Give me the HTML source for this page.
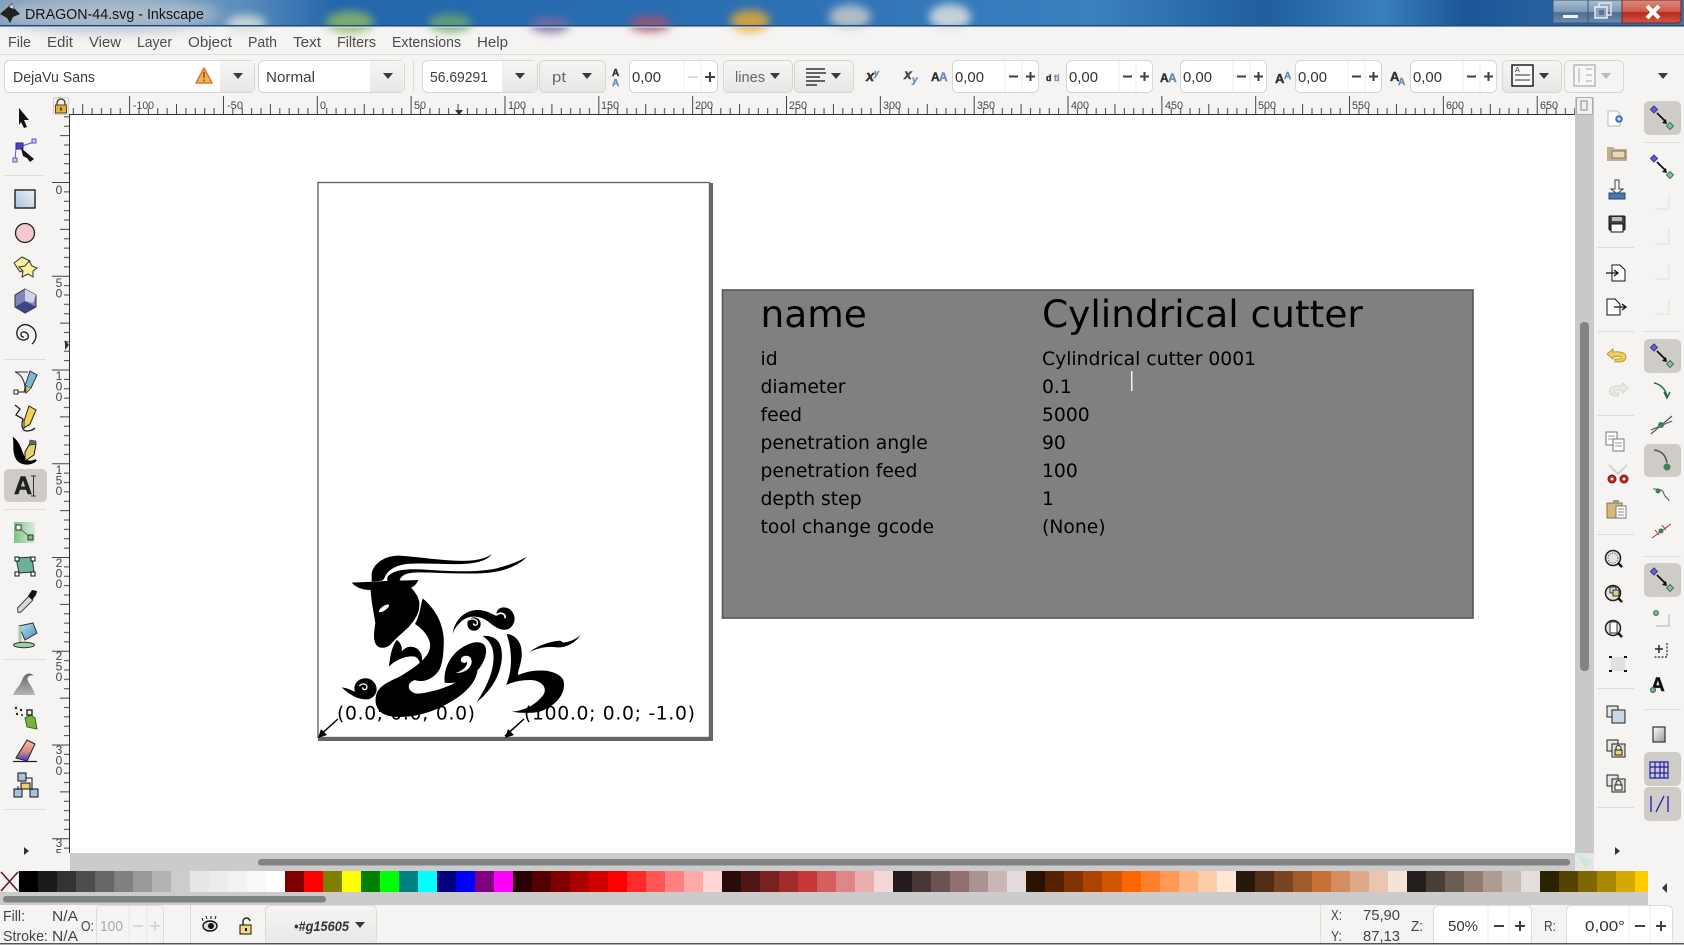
<!DOCTYPE html>
<html><head><meta charset="utf-8"><title>DRAGON-44.svg - Inkscape</title>
<style>
html,body{margin:0;padding:0;background:#f5f4f2;width:1684px;height:946px;overflow:hidden}
svg{position:absolute;left:0;top:0;display:block}
svg text{font-family:"Liberation Sans",sans-serif}
#pal{position:absolute;left:18.6px;top:871px;width:1629.4px;height:21px;display:flex;overflow:hidden}
#pal i{flex:0 0 19.03px;height:21px;display:block}
</style></head><body>
<svg width="1684" height="946" viewBox="0 0 1684 946" xmlns="http://www.w3.org/2000/svg">
<defs>
<linearGradient id="tb" x1="0" x2="1" y1="0" y2="0"><stop offset="0" stop-color="#7f9cb8"/><stop offset=".14" stop-color="#5f8fbd"/><stop offset=".2" stop-color="#2266ac"/><stop offset=".45" stop-color="#2c70b4"/><stop offset=".65" stop-color="#3b80bf"/><stop offset=".75" stop-color="#1f5e9f"/><stop offset=".82" stop-color="#3a80bd"/><stop offset=".87" stop-color="#1c5698"/><stop offset="1" stop-color="#3d72a6"/></linearGradient>
<linearGradient id="glass" x1="0" x2="0" y1="0" y2="1"><stop offset="0" stop-color="#a8bed2"/><stop offset=".5" stop-color="#7f9ab6"/><stop offset=".55" stop-color="#4d6f95"/><stop offset="1" stop-color="#6e8cab"/></linearGradient>
<linearGradient id="red" x1="0" x2="0" y1="0" y2="1"><stop offset="0" stop-color="#dd8a7f"/><stop offset=".5" stop-color="#cf5a4a"/><stop offset=".55" stop-color="#b9281c"/><stop offset="1" stop-color="#d2574a"/></linearGradient>
<linearGradient id="btn" x1="0" x2="0" y1="0" y2="1"><stop offset="0" stop-color="#f6f5f3"/><stop offset="1" stop-color="#e9e7e5"/></linearGradient>
<linearGradient id="rectg" x1="0" x2="1" y1="1" y2="0"><stop offset="0" stop-color="#a9c3dd"/><stop offset="1" stop-color="#eef3f8"/></linearGradient>
<linearGradient id="wave" x1="0" x2="0" y1="0" y2="1"><stop offset="0" stop-color="#666"/><stop offset="1" stop-color="#b5b5b5"/></linearGradient>
<linearGradient id="erase" x1="0" x2="0" y1="0" y2="1"><stop offset="0" stop-color="#f0c0a8"/><stop offset=".55" stop-color="#d98a80"/><stop offset="1" stop-color="#2b3fe0"/></linearGradient>
<linearGradient id="grad" x1="1" x2="0" y1="0" y2="0"><stop offset="0" stop-color="#d7eed8"/><stop offset="1" stop-color="#82c188"/></linearGradient>
<linearGradient id="pail" x1="0" x2="1" y1="0" y2="1"><stop offset="0" stop-color="#c8e2ee"/><stop offset="1" stop-color="#3f8fb8"/></linearGradient>
<linearGradient id="page" x1="0" x2="1" y1="0" y2="1"><stop offset="0" stop-color="#fff"/><stop offset="1" stop-color="#999"/></linearGradient>
<filter id="b8" x="-50%" y="-100%" width="200%" height="300%"><feGaussianBlur stdDeviation="7"/></filter>
<filter id="b3" x="-50%" y="-100%" width="200%" height="300%"><feGaussianBlur stdDeviation="4.5"/></filter>
<pattern id="rt" patternUnits="userSpaceOnUse" x="316.8" y="96" width="93.84" height="18"><g fill="#444"><rect x="0" y="0" width="1" height="18"/><rect x="46.92" y="8" width="1" height="10"/><rect x="9.38" y="12" width="1" height="6"/><rect x="18.77" y="12" width="1" height="6"/><rect x="28.15" y="12" width="1" height="6"/><rect x="37.54" y="12" width="1" height="6"/><rect x="56.3" y="12" width="1" height="6"/><rect x="65.69" y="12" width="1" height="6"/><rect x="75.07" y="12" width="1" height="6"/><rect x="84.46" y="12" width="1" height="6"/></g></pattern>
<pattern id="rl" patternUnits="userSpaceOnUse" x="52" y="182" width="17" height="93.75"><g fill="#444"><rect x="0" y="0" width="17" height="1"/><rect x="8" y="46.87" width="9" height="1"/><rect x="12" y="9.37" width="5" height="1"/><rect x="12" y="18.75" width="5" height="1"/><rect x="12" y="28.12" width="5" height="1"/><rect x="12" y="37.5" width="5" height="1"/><rect x="12" y="56.25" width="5" height="1"/><rect x="12" y="65.62" width="5" height="1"/><rect x="12" y="75" width="5" height="1"/><rect x="12" y="84.37" width="5" height="1"/></g></pattern>
<path id="dn" d="M-5,-3h10l-5,6z" fill="#3a3a3a"/>
<g id="spin"><rect x=".5" y=".5" width="86" height="32" rx="5" fill="#fff" stroke="#d9d7d3"/><path d="M53,1v31M70,1v31" stroke="#eeeded"/><path d="M57,16.5h9M74,16.5h9M78.5,12v9" stroke="#3f3f3f" stroke-width="2"/></g>
<g id="sn"><path d="M-5,-5L3,3" stroke="#111" stroke-width="1.8"/><path d="M0,5l5,1l-1,-5z" fill="#111"/><path d="M-8,-12l3.5,3.5l-3.5,3.5l-3.5,-3.5z" fill="#6a60cc" stroke="#3c3498"/><path d="M8,4.5l3.5,3.5l-3.5,3.5l-3.5,-3.5z" fill="#8fbb9c" stroke="#3a7a55"/></g>
<g id="faint"><path d="M7,-8v15h-14" fill="none" stroke="#e8e6e3" stroke-width="1.6"/></g>
<g id="zoomi"><circle r="7.5" fill="#e4e4e4" stroke="#222" stroke-width="1.5"/><path d="M5,5l4,4" stroke="#111" stroke-width="2.5"/></g>
</defs>

<rect width="1684" height="946" fill="#f5f4f2"/>

<!-- title bar -->
<rect width="1684" height="25" fill="url(#tb)"/>
<g filter="url(#b3)" opacity=".85"><ellipse cx="246" cy="24" rx="20" ry="9" fill="#d8e0da"/><ellipse cx="350" cy="22" rx="24" ry="11" fill="#8bb765"/><ellipse cx="450" cy="23" rx="22" ry="9" fill="#6ba56f"/><ellipse cx="550" cy="25" rx="20" ry="8" fill="#7d6a9c"/><ellipse cx="650" cy="24" rx="21" ry="8" fill="#a9506a"/><ellipse cx="750" cy="21" rx="20" ry="11" fill="#e8a92f"/><ellipse cx="850" cy="17" rx="21" ry="12" fill="#c7c9c8"/><ellipse cx="950" cy="17" rx="21" ry="13" fill="#dfe1e0"/></g>
<ellipse cx="110" cy="14" rx="110" ry="17" fill="#a9bacb" filter="url(#b8)"/>
<rect y="25" width="1684" height="1.5" fill="#1d4a78"/>
<rect y="26.5" width="1684" height="1" fill="#e2e8ee"/>
<path d="M0,14L9,6L12,3L14,8L20,14L13,17L10,23L7,18z" fill="#222"/><path d="M9,7l3,-3l2,5z" fill="#ddd"/>
<text x="25" y="19" font-size="15" fill="#141414" textLength="179" lengthAdjust="spacingAndGlyphs">DRAGON-44.svg - Inkscape</text>
<rect x="1553" y="0" width="35" height="23" fill="url(#glass)" stroke="#3a5674"/><rect x="1588" y="0" width="34" height="23" fill="url(#glass)" stroke="#3a5674"/><path d="M1622,0h59v19q0,4,-4,4h-55z" fill="url(#red)" stroke="#6d2d2d"/>
<rect x="1563" y="15" width="15" height="3" fill="#f0f2f4"/>
<rect x="1599" y="3" width="12" height="12" fill="none" stroke="#dfe6ec" stroke-width="1.5"/><rect x="1595" y="7" width="12" height="11" fill="#8aa3bb" stroke="#e8edf1" stroke-width="1.5"/><rect x="1599" y="10" width="5" height="5" fill="#5a7694"/>
<path d="M1647,6L1659,18M1659,6L1647,18" stroke="#fff" stroke-width="4"/>

<!-- menu -->
<g font-size="14.5" fill="#4c4c4c">
<text x="8" y="47" textLength="23" lengthAdjust="spacingAndGlyphs">File</text><text x="47" y="47" textLength="26" lengthAdjust="spacingAndGlyphs">Edit</text><text x="89" y="47" textLength="32" lengthAdjust="spacingAndGlyphs">View</text><text x="137" y="47" textLength="35" lengthAdjust="spacingAndGlyphs">Layer</text><text x="188" y="47" textLength="44" lengthAdjust="spacingAndGlyphs">Object</text><text x="248" y="47" textLength="29" lengthAdjust="spacingAndGlyphs">Path</text><text x="293" y="47" textLength="28" lengthAdjust="spacingAndGlyphs">Text</text><text x="337" y="47" textLength="39" lengthAdjust="spacingAndGlyphs">Filters</text><text x="392" y="47" textLength="69" lengthAdjust="spacingAndGlyphs">Extensions</text><text x="477" y="47" textLength="31" lengthAdjust="spacingAndGlyphs">Help</text>
</g>
<rect y="54" width="1684" height="1" fill="#dedcd9"/>

<!-- text toolbar -->
<g stroke="#d9d7d3" fill="#fff">
<rect x="4.5" y="60.5" width="250" height="32" rx="5"/><rect x="220" y="61" width="34" height="31" fill="url(#btn)" stroke="none"/>
<rect x="258.5" y="60.5" width="146" height="32" rx="5"/><rect x="370" y="61" width="34" height="31" fill="url(#btn)" stroke="none"/>
<rect x="422.5" y="60.5" width="115" height="32" rx="5"/><rect x="502" y="61" width="35" height="31" fill="url(#btn)" stroke="none"/>
<rect x="539.5" y="60.5" width="66" height="32" rx="5" fill="url(#btn)"/>
<rect x="723.5" y="60.5" width="69" height="32" rx="5" fill="url(#btn)"/>
<rect x="794.5" y="60.5" width="59" height="32" rx="5" fill="url(#btn)"/>
<rect x="1502.5" y="60.5" width="59" height="32" rx="5" fill="url(#btn)"/>
<rect x="1564.5" y="60.5" width="59" height="32" rx="5" fill="#f5f4f2"/>
</g>
<rect x="413" y="60" width="1" height="32" fill="#dedcd9"/>
<g font-size="15" fill="#3d3d3d">
<text x="13" y="82" textLength="82" lengthAdjust="spacingAndGlyphs">DejaVu Sans</text>
<text x="266" y="82" textLength="49" lengthAdjust="spacingAndGlyphs">Normal</text>
<text x="430" y="82" textLength="58" lengthAdjust="spacingAndGlyphs">56.69291</text>
<text x="552" y="82" fill="#666" textLength="14" lengthAdjust="spacingAndGlyphs">pt</text>
<text x="735" y="82" fill="#666" textLength="30" lengthAdjust="spacingAndGlyphs">lines</text>
</g>
<path d="M204,68l8,15h-16z" fill="#f0b25a" stroke="#d9792a" stroke-width="1.5" stroke-linejoin="round"/><path d="M204,72v6M204,79.5v2" stroke="#8a4a18" stroke-width="1.5"/>
<use href="#dn" x="238" y="76"/><use href="#dn" x="388" y="76"/><use href="#dn" x="520" y="76"/><use href="#dn" x="587" y="76"/><use href="#dn" x="775" y="76"/><use href="#dn" x="836" y="76"/><use href="#dn" x="1544" y="76"/><use href="#dn" x="1663" y="76"/>
<path d="M1601,73h10l-5,6z" fill="#b9b9b9"/>
<!-- spin boxes -->
<rect x="629.5" y="60.5" width="88" height="32" rx="5" fill="#fff" stroke="#d9d7d3"/><path d="M684,61v31M701,61v31" stroke="#eeeded"/><path d="M688,77h10" stroke="#dcdcdc" stroke-width="2"/><path d="M705,77h10M710,72v10" stroke="#3f3f3f" stroke-width="2"/>
<use href="#spin" x="952" y="60"/><use href="#spin" x="1066" y="60"/><use href="#spin" x="1180" y="60"/><use href="#spin" x="1295" y="60"/><use href="#spin" x="1410" y="60"/>
<g font-size="15" fill="#333">
<text x="632" y="82" textLength="29" lengthAdjust="spacingAndGlyphs">0,00</text><text x="955" y="82" textLength="29" lengthAdjust="spacingAndGlyphs">0,00</text><text x="1069" y="82" textLength="29" lengthAdjust="spacingAndGlyphs">0,00</text><text x="1183" y="82" textLength="29" lengthAdjust="spacingAndGlyphs">0,00</text><text x="1298" y="82" textLength="29" lengthAdjust="spacingAndGlyphs">0,00</text><text x="1413" y="82" textLength="29" lengthAdjust="spacingAndGlyphs">0,00</text>
</g>
<!-- small text-tool icons -->
<g font-weight="bold" stroke-width=".4">
<text x="612" y="76" font-size="10" fill="#333" stroke="#333">A</text><text x="612" y="86" font-size="10" fill="#6d8eb0" stroke="#6d8eb0">A</text>
<text x="866" y="81" font-size="15" font-style="italic" fill="#333" stroke="#333">x</text><text x="874" y="76" font-size="9" font-style="italic" fill="#6d8eb0" stroke="#6d8eb0">y</text>
<text x="904" y="79" font-size="14" font-style="italic" fill="#444" stroke="#444">x</text><text x="912" y="83" font-size="10" font-style="italic" fill="#6d8eb0" stroke="#6d8eb0">y</text>
<text x="931" y="81" font-size="12" fill="#333" stroke="#333">A</text><text x="939" y="81" font-size="12" fill="#6d8eb0" stroke="#6d8eb0">A</text>
<text x="1046" y="81" font-size="9" fill="#333" stroke="#333">d</text><text x="1054" y="81" font-size="9" fill="#6d8eb0" stroke="#6d8eb0">ti</text>
<text x="1160" y="82" font-size="12" fill="#333" stroke="#333">A</text><text x="1168" y="82" font-size="12" fill="#6d8eb0" stroke="#6d8eb0">A</text>
<text x="1275" y="83" font-size="13" fill="#333" stroke="#333">A</text><text x="1284" y="79" font-size="10" fill="#6d8eb0" stroke="#6d8eb0">A</text>
<text x="1390" y="81" font-size="13" fill="#333" stroke="#333">A</text><text x="1398" y="85" font-size="10" fill="#6d8eb0" stroke="#6d8eb0">A</text>
</g>
<path d="M806,69h19M806,73h20M806,77h14M806,81h19M806,85h11" stroke="#333" stroke-width="1.6"/>
<rect x="1512" y="65" width="21" height="21" fill="#f7f7f7" stroke="#111" stroke-width="1.4"/><path d="M1515,80h15M1515,75h15" stroke="#333"/><text x="1515" y="72" font-size="7" fill="#333">A</text>
<rect x="1574" y="65" width="21" height="21" fill="#f7f7f7" stroke="#aaa" stroke-width="1.2"/><path d="M1579,68v15M1586,69h6M1586,75h6M1586,81h6" stroke="#aaa"/>

<!-- canvas -->
<rect x="70" y="115" width="1505" height="738" fill="#fff"/>

<!-- top ruler -->
<rect x="70" y="96" width="1505" height="18" fill="url(#rt)"/>
<rect x="69" y="114" width="1506" height="1" fill="#333"/>
<g font-size="11" fill="#444">
<text x="133" y="109" textLength="21" lengthAdjust="spacingAndGlyphs">-100</text><text x="227" y="109" textLength="16" lengthAdjust="spacingAndGlyphs">-50</text><text x="320" y="109" textLength="6" lengthAdjust="spacingAndGlyphs">0</text><text x="414" y="109" textLength="12" lengthAdjust="spacingAndGlyphs">50</text><text x="508" y="109" textLength="18" lengthAdjust="spacingAndGlyphs">100</text><text x="601" y="109" textLength="18" lengthAdjust="spacingAndGlyphs">150</text><text x="695" y="109" textLength="18" lengthAdjust="spacingAndGlyphs">200</text><text x="789" y="109" textLength="18" lengthAdjust="spacingAndGlyphs">250</text><text x="883" y="109" textLength="18" lengthAdjust="spacingAndGlyphs">300</text><text x="977" y="109" textLength="18" lengthAdjust="spacingAndGlyphs">350</text><text x="1071" y="109" textLength="18" lengthAdjust="spacingAndGlyphs">400</text><text x="1165" y="109" textLength="18" lengthAdjust="spacingAndGlyphs">450</text><text x="1258" y="109" textLength="18" lengthAdjust="spacingAndGlyphs">500</text><text x="1352" y="109" textLength="18" lengthAdjust="spacingAndGlyphs">550</text><text x="1446" y="109" textLength="18" lengthAdjust="spacingAndGlyphs">600</text><text x="1540" y="109" textLength="18" lengthAdjust="spacingAndGlyphs">650</text>
</g>
<path d="M455,110h8l-4,5z" fill="#333"/>

<!-- left ruler -->
<rect x="52" y="115" width="17" height="738" fill="url(#rl)"/>
<rect x="69" y="115" width="1" height="738" fill="#333"/>
<g font-size="12" fill="#444" text-anchor="middle">
<text x="59" y="194">0</text>
<text x="59" y="287">5<tspan x="59" dy="10.5">0</tspan></text>
<text x="59" y="380">1<tspan x="59" dy="10.5">0</tspan><tspan x="59" dy="10.5">0</tspan></text>
<text x="59" y="474">1<tspan x="59" dy="10.5">5</tspan><tspan x="59" dy="10.5">0</tspan></text>
<text x="59" y="567">2<tspan x="59" dy="10.5">0</tspan><tspan x="59" dy="10.5">0</tspan></text>
<text x="59" y="660">2<tspan x="59" dy="10.5">5</tspan><tspan x="59" dy="10.5">0</tspan></text>
<text x="59" y="754">3<tspan x="59" dy="10.5">0</tspan><tspan x="59" dy="10.5">0</tspan></text>
<text x="59" y="847">3<tspan x="59" dy="10.5">5</tspan></text>
</g>
<path d="M65,340l4,5l-4,5z" fill="#333"/>
<rect x="53.5" y="97.5" width="15" height="17" rx="2" fill="#f3f1ec" stroke="#ccc"/>
<path d="M57,106v-3a4,4,0,0,1,8,0v3" fill="none" stroke="#444" stroke-width="1.4"/><rect x="55.5" y="105" width="11" height="8" fill="#e3b23c" stroke="#5a4210"/><rect x="60" y="107.5" width="2" height="3" fill="#5a4210"/>

<!-- page -->
<rect x="318" y="182.5" width="391.5" height="555" fill="#fff" stroke="#666" stroke-width="1.4"/>
<rect x="709" y="183" width="4" height="558" fill="#666"/><rect x="318" y="737" width="395" height="4" fill="#666"/>

<!-- dragon -->
<g transform="translate(300 540) scale(.33333)" fill="#000">
<path d="M215,100C222,68 255,48 295,47C360,50 440,66 510,62C540,60 560,52 575,44C560,62 530,70 490,72C430,74 370,68 320,72C290,76 265,88 255,110C250,125 245,122 215,125z"/>
<path d="M262,112C275,92 310,86 360,88C430,92 520,100 590,85C630,75 660,62 682,50C650,82 600,98 540,100C480,102 420,98 360,97C325,97 305,102 298,122L355,120C350,132 340,145 312,150L262,130z"/>
<path d="M155,128L225,125L300,120L330,140C345,155 360,175 358,195C358,220 345,240 325,262C305,280 285,298 270,315C258,325 240,327 230,316C218,300 222,275 226,250C222,220 214,190 212,150C190,150 170,145 155,128z"/>
<ellipse cx="252" cy="205" rx="18" ry="6.5" transform="rotate(-35 252 205)" fill="#fff"/>
<path d="M368,175C415,215 435,265 431,320C430,345 428,365 420,385C405,415 370,430 345,420C325,425 320,445 335,455C345,465 370,460 390,455C440,445 490,420 515,390C520,378 525,385 532,395C525,435 485,470 435,495C385,522 320,538 268,528C232,520 220,492 230,460C243,428 285,420 315,400C355,375 395,345 390,310C385,285 365,265 345,252C360,225 362,195 368,175z"/>
<path d="M290,300C275,320 270,350 267,380C285,360 320,345 345,350C360,358 365,375 350,385C372,378 372,340 350,325C330,315 315,322 305,335C308,320 300,305 290,300z"/>
<path d="M434,428C428,375 465,322 520,308C552,302 565,320 555,352C540,400 490,435 434,428z"/><path d="M468,398C490,402 515,385 515,365C515,345 492,343 484,354C477,367 495,374 500,364C505,378 488,392 468,398z" fill="#fff"/>
<path d="M548,288C590,285 610,310 605,360C600,410 570,455 530,487C560,440 585,390 580,340C578,315 565,300 548,288z"/>
<path d="M620,282C650,285 668,310 665,350C662,380 650,400 655,405C700,385 770,385 790,420C800,460 770,495 720,515C700,520 660,520 635,515C680,512 710,490 730,465C745,440 720,420 690,420C665,420 640,425 618,435C635,400 640,340 620,282z"/>
<path d="M688,337C710,318 745,305 780,302L790,308C810,305 830,298 843,283C830,305 800,325 770,322C745,318 715,322 688,337z"/>
<path d="M458,282C462,245 490,212 530,210C560,210 575,222 590,228C585,205 610,195 630,208C650,225 648,255 625,267C605,275 585,262 565,245C540,225 505,225 485,243C470,257 462,268 458,282z"/>
<circle cx="522" cy="252" r="20"/><path d="M505,240C520,232 535,240 532,252C528,258 520,256 520,250" fill="none" stroke="#fff" stroke-width="4"/>
<path d="M590,225C600,215 618,220 615,235" fill="none" stroke="#fff" stroke-width="5"/>
<path d="M125,442C145,444 155,452 165,455C155,425 190,405 215,420C240,440 232,470 205,478C170,480 145,460 125,442z"/><path d="M178,438C190,425 205,435 200,445C195,452 187,448 188,442" fill="none" stroke="#fff" stroke-width="4"/>
</g>
<text x="337" y="719.5" font-size="18.75" fill="#000" style="font-family:'DejaVu Sans',sans-serif" textLength="138">(0.0; 0.0; 0.0)</text>
<text x="524" y="719.5" font-size="18.75" fill="#000" style="font-family:'DejaVu Sans',sans-serif" textLength="171">(100.0; 0.0; -1.0)</text>
<path d="M319,736L338,719M505,736L524,719" stroke="#000" stroke-width="1.5"/><path d="M318,738l3,-9l6,6zM505,738l3,-9l6,6z" fill="#000"/>

<!-- grey table -->
<rect x="722.5" y="290" width="750.5" height="328" fill="#808080" stroke="#555" stroke-width="1.6"/>
<g fill="#000">
<text x="760.5" y="327" font-size="37.5" style="font-family:'DejaVu Sans',sans-serif">name</text>
<text x="1042" y="327" font-size="37.5" style="font-family:'DejaVu Sans',sans-serif">Cylindrical cutter</text>
<g font-size="18.75">
<text x="760.5" y="365" style="font-family:'DejaVu Sans',sans-serif">id</text><text x="1042" y="365" style="font-family:'DejaVu Sans',sans-serif">Cylindrical cutter 0001</text>
<text x="760.5" y="393" style="font-family:'DejaVu Sans',sans-serif">diameter</text><text x="1042" y="393" style="font-family:'DejaVu Sans',sans-serif">0.1</text>
<text x="760.5" y="421" style="font-family:'DejaVu Sans',sans-serif">feed</text><text x="1042" y="421" style="font-family:'DejaVu Sans',sans-serif">5000</text>
<text x="760.5" y="449" style="font-family:'DejaVu Sans',sans-serif">penetration angle</text><text x="1042" y="449" style="font-family:'DejaVu Sans',sans-serif">90</text>
<text x="760.5" y="477" style="font-family:'DejaVu Sans',sans-serif">penetration feed</text><text x="1042" y="477" style="font-family:'DejaVu Sans',sans-serif">100</text>
<text x="760.5" y="505" style="font-family:'DejaVu Sans',sans-serif">depth step</text><text x="1042" y="505" style="font-family:'DejaVu Sans',sans-serif">1</text>
<text x="760.5" y="533" style="font-family:'DejaVu Sans',sans-serif">tool change gcode</text><text x="1042" y="533" style="font-family:'DejaVu Sans',sans-serif">(None)</text>
</g></g>
<rect x="1131" y="371" width="1.5" height="20" fill="#f2f2f2"/>

<!-- scrollbars, bottom -->
<rect x="1575" y="97" width="19" height="756" fill="#c9c9c9"/>
<rect x="1594" y="95" width="90" height="760" fill="#f5f4f2"/>
<rect x="1576.5" y="97.5" width="16" height="17" rx="2" fill="#f1f0ee" stroke="#aaa"/><rect x="1581" y="101" width="6" height="9" fill="none" stroke="#888"/>
<rect x="1580" y="322" width="9" height="349" rx="4" fill="#808484"/>
<rect x="0" y="853" width="70" height="18" fill="#f5f4f2"/>
<rect x="70" y="853" width="1505" height="18" fill="#cbcbcb"/>
<rect x="1575" y="853" width="19" height="18" fill="#e6e6e6"/><path d="M1577,855l15,6l-6,9z" fill="#cfe6d8"/>
<rect x="258" y="859" width="1312" height="6.5" rx="3" fill="#7f8484"/>
<rect x="0" y="871" width="1648" height="34" fill="#cbcbcb"/>
<rect x="0" y="871" width="18.6" height="21" fill="#f5f4f2"/><path d="M1,872L18,891M18,872L1,891" stroke="#6e1a22" stroke-width="1.6"/>
<rect x="3" y="896" width="323" height="6.5" rx="3" fill="#7e8282"/>
<path d="M1667,883v10l-5,-5z" fill="#333"/>

<!-- left toolbox -->
<rect x="0" y="96" width="48" height="757" fill="#f5f4f2"/>
<path d="M19,108L29,120H24L27,127L24,128L21,122L19,125z" fill="#111"/>
<path d="M19,147L34,142M16,148L15,160" stroke="#5a55c0"/><rect x="16" y="143" width="7" height="6" fill="#4a44c4" stroke="#2a2580"/><rect x="32" y="139" width="4" height="4" fill="#cfcdf0" stroke="#5a55c0"/><rect x="13" y="158" width="4" height="4" fill="#cfcdf0" stroke="#5a55c0"/><path d="M21,148L34,159L30,162L27,158L23,156z" fill="#111"/>
<g stroke="#dedcd9"><path d="M4,175.5H44M4,359.5H46M4,509.5H46M4,659.5H46M4,809.5H46"/></g>
<rect x="15" y="190" width="20" height="18" fill="url(#rectg)" stroke="#111" stroke-width="1.3"/>
<circle cx="25" cy="233" r="9.5" fill="#f6c9cf" stroke="#222" stroke-width="1.3"/>
<path d="M14,263L22,257L30,261L28,268L20,272z" fill="#fbeea0" stroke="#333"/><path d="M29,261L32,266L37,268L33,271L33,277L28,274L22,277L23,271L19,267L25,266z" fill="#fbeea0" stroke="#333"/>
<path d="M25,289L36,295V307L25,313L15,307V295z" fill="#8084b8" stroke="#333"/><path d="M25,301L36,307L25,313L15,307z" fill="#3f4488"/><path d="M25,289L36,295L33,303L25,301z" fill="#d0d2ea"/>
<path d="M24,337a2.5,2.5 0 0 1 -1,-5a4.5,4.5 0 0 1 5,6a6.5,6.5 0 0 1 -11,-3a8.5,8.5 0 0 1 13,-9a10.5,10.5 0 0 1 5,14a11,11 0 0 1 -3,4" fill="none" stroke="#222" stroke-width="1.4"/>
<path d="M15,372C22,374 27,385 24,392M15,372H28" fill="none" stroke="#333" stroke-width="1.1"/><path d="M30,371l7,4l-6,13l-5,5l-1,-7z" fill="#7fb6d4" stroke="#333"/><path d="M26,386l5,2l-5,5z" fill="#e8d264" stroke="#333" stroke-width=".6"/><rect x="14" y="390" width="4" height="4" fill="#fff" stroke="#222"/><path d="M18,392H26" stroke="#222"/>
<path d="M15,405l5,4l-4,6l7,4c-2,6,-1,11,3,12c3,0,7,-1,9,-3" fill="none" stroke="#222" stroke-width="1.3"/><path d="M29,406l7,4l-6,14l-6,4l0,-7z" fill="#f3d24f" stroke="#222"/>
<path d="M14,439c5,4,7,12,10,19c3,5,8,4,12,2c-5,5,-15,5,-19,-1c-4,-7,-2,-13,-3,-20z" fill="#000" stroke="#000" stroke-width="2"/><path d="M29,445l7,-1l-2,11l-9,6l0,-9z" fill="#e8d264" stroke="#111"/><path d="M30,440l6,1v3l-7,1z" fill="#666" stroke="#333" stroke-width=".6"/>
<rect x="4" y="469" width="43" height="33" rx="5" fill="#cfccc8"/>
<text x="14" y="494" font-size="25" font-weight="bold" fill="#222" stroke="#222" stroke-width=".6">A</text><path d="M31,476h5M33.5,476v20M31,496h5" stroke="#333"/>
<rect x="14" y="522" width="21" height="21" fill="url(#grad)"/><path d="M18,527L31,538" stroke="#666"/><rect x="16" y="525" width="5" height="5" fill="#fff" stroke="#333"/><rect x="28" y="535" width="5" height="5" fill="#7fb98a" stroke="#333"/>
<path d="M16,558l16,-1l2,15l-15,1z" fill="#6fb09a" stroke="#333"/><g fill="#fff" stroke="#111"><rect x="15" y="557" width="4" height="4"/><rect x="31" y="557" width="4" height="4"/><rect x="15" y="572" width="4" height="4"/><rect x="31" y="572" width="4" height="4"/></g>
<path d="M17.5,608L29,596L33,600L21,612L18,612.5z" fill="#d8d8d8" stroke="#444"/><path d="M28,596l4,-6l5,1l-1,4l-4,5z" fill="#111"/>
<path d="M19,626l14,-3l4,10l-12,7z" fill="url(#pail)" stroke="#333"/><path d="M20,626v17" stroke="#9ccfa6" stroke-width="3"/><ellipse cx="24" cy="645" rx="10.5" ry="2.7" fill="#a0d0a8" stroke="#333"/>
<path d="M13,695C16,688 20,686 22,680C24,674 30,671 34,676C30,674 26,677 28,681C30,685 33,688 35,695z" fill="url(#wave)"/>
<circle cx="16" cy="708" r="1.2" fill="#222"/><circle cx="21" cy="710" r="1.2" fill="#222"/><circle cx="17" cy="714" r="1.2" fill="#222"/><circle cx="22" cy="715" r="1" fill="#222"/><path d="M25,718l6,-3l4,3l2,11l-10,-2z" fill="#7ab33c" stroke="#3a6a1a"/><rect x="27" y="710" width="5" height="5" fill="none" stroke="#222" stroke-width="1.4"/>
<path d="M27,740l8,4l-8,17l-11,-3z" fill="url(#erase)" stroke="#222"/><path d="M13,761.5H37" stroke="#222" stroke-width="1.3"/>
<g stroke="#111" fill="#a7c3e0"><rect x="18" y="773" width="8" height="8"/><rect x="14" y="789" width="8" height="8"/><rect x="30" y="789" width="8" height="8"/></g><rect x="21" y="783" width="9" height="6" fill="#f0cf68" stroke="#111"/><path d="M26,778H32V790M18,790V786" fill="none" stroke="#111"/>
<path d="M24,847l5,4l-5,4z" fill="#333"/>

<!-- right column icons -->
<g stroke="#dedcd9"><path d="M1597,247.5h37M1597,331.5h37M1597,415.5h37M1597,534.5h37M1597,688.5h37M1597,807.5h37M1644,142.5h37M1644,331.5h37M1644,556.5h37M1644,709.5h37"/></g>
<path d="M1608,111h9l3,3v12h-12z" fill="#fff" stroke="#bbb"/><circle cx="1619" cy="119" r="3.8" fill="#3b77b5"/><path d="M1617,119h4M1619,117v4" stroke="#fff"/>
<path d="M1607,147h6l2,2h12v12h-20z" fill="#c0ad8e"/><rect x="1612" y="151" width="13" height="7" fill="#e6d8c0" stroke="#8a7656"/>
<path d="M1615,180v9h-4l6,5l6,-5h-4v-9z" fill="#eef2f6" stroke="#444"/><rect x="1609" y="193" width="16" height="6" fill="#4a78b0" stroke="#2a4870"/>
<rect x="1609" y="216" width="16" height="14" rx="1" fill="#444" stroke="#111"/><rect x="1612" y="217" width="10" height="4" fill="#bbb"/><rect x="1611" y="224" width="12" height="8" fill="#fff" stroke="#111"/>
<path d="M1612,265h8l5,5v11h-13z" fill="#fff" stroke="#111"/><path d="M1606,273h12M1614,270l4,3l-4,3" fill="none" stroke="#111" stroke-width="1.3"/>
<path d="M1607,299h8l5,5v11h-13z" fill="#fff" stroke="#111"/><path d="M1614,307h12M1622,304l4,3l-4,3" fill="none" stroke="#111" stroke-width="1.3"/>
<path d="M1607,354l6,-5v3c8,-1,13,1,13,5c0,3,-3,5,-6,5h-5v-3h4c2,0,3,-1,2,-2c-1,-1,-4,-1,-8,0v2z" fill="#f2cf50" stroke="#a88a20" stroke-width=".8"/>
<path d="M1628.5,388l-6,-5v3c-8,-1,-13,1,-13,5c0,3,3,5,6,5h3v-3h-2c-2,0,-3,-1,-2,-2c1,-1,4,-1,8,0v2z" fill="#e6ebe2" stroke="#ccd4c8" stroke-width=".8"/>
<rect x="1606" y="432" width="11" height="13" fill="#fff" stroke="#777"/><rect x="1613" y="439" width="11" height="12" fill="#fff" stroke="#777"/><path d="M1608,436h7M1608,439h5M1615,443h7M1615,446h7" stroke="#999"/>
<path d="M1609,465l9,9l9,-9" fill="none" stroke="#ccc" stroke-width="1.6"/><circle cx="1612" cy="479" r="4" fill="#c42a2a" stroke="#7a1010"/><circle cx="1624" cy="479" r="4" fill="#c42a2a" stroke="#7a1010"/><circle cx="1612" cy="479" r="1.4" fill="#fff"/><circle cx="1624" cy="479" r="1.4" fill="#fff"/>
<rect x="1607" y="503" width="15" height="15" fill="#d9b778" stroke="#8a7040"/><rect x="1613" y="500" width="6" height="4" fill="#999"/><rect x="1616" y="506" width="10" height="12" fill="#fff" stroke="#777"/><path d="M1618,509h6M1618,512h6M1618,515h6" stroke="#888"/>
<use href="#zoomi" x="1613" y="558"/><use href="#zoomi" x="1613" y="593"/><use href="#zoomi" x="1613" y="628"/>
<circle cx="1613" cy="558" r="5" fill="none" stroke="#555" stroke-dasharray="1 1.5"/><rect x="1610" y="587" width="6" height="6" fill="#ddd" stroke="#333"/><rect x="1613" y="590" width="6" height="6" fill="#e6cd8c" stroke="#333"/><rect x="1610" y="622" width="7" height="11" fill="#fff" stroke="#333"/>
<rect x="1611" y="657" width="14" height="14" fill="#e0e0e0"/><path d="M1609,657h3M1624,657h3M1609,671h3M1624,671h3" stroke="#111" stroke-width="2"/>
<rect x="1607" y="706" width="11" height="11" fill="#e6e6e6" stroke="#222"/><rect x="1612" y="710" width="13" height="13" fill="#c6d8ea" stroke="#222"/>
<rect x="1607" y="740" width="11" height="11" fill="#e6e6e6" stroke="#222"/><rect x="1612" y="744" width="13" height="13" fill="#dfe3d8" stroke="#222"/><rect x="1615" y="750" width="7" height="5" fill="#f1d65c" stroke="#222"/><path d="M1616,750v-2a2.5,2.5,0,0,1,5,0v2" fill="none" stroke="#222"/>
<rect x="1607" y="775" width="11" height="11" fill="#e6e6e6" stroke="#222"/><rect x="1612" y="779" width="13" height="13" fill="#dfe3d8" stroke="#222"/><rect x="1615" y="785" width="7" height="5" fill="#fff" stroke="#222"/><path d="M1616,785v-2a2.5,2.5,0,0,1,5,0v2" fill="none" stroke="#222"/>
<path d="M1615,847l5,4l-5,4z" fill="#333"/>

<!-- snap column -->
<g fill="#cfccc8"><rect x="1644" y="101" width="37" height="34" rx="5"/><rect x="1644" y="339" width="37" height="34" rx="5"/><rect x="1644" y="444" width="37" height="33" rx="5"/><rect x="1644" y="563" width="37" height="34" rx="5"/><rect x="1644" y="752" width="37" height="34" rx="5"/><rect x="1644" y="787" width="37" height="34" rx="5"/></g>
<use href="#sn" x="1662" y="118"/><use href="#sn" x="1662" y="167"/><use href="#sn" x="1662" y="356"/><use href="#sn" x="1662" y="580"/>
<use href="#faint" x="1662" y="202"/><use href="#faint" x="1662" y="237"/><use href="#faint" x="1662" y="272"/><use href="#faint" x="1662" y="307"/>
<path d="M1654,383c6,1,12,6,13,14M1664,392l3,6l3,-6" fill="none" stroke="#2f6b48" stroke-width="1.5"/>
<path d="M1651,434L1672,416" stroke="#555" stroke-width="1.2"/><path d="M1651,430L1672,421" stroke="#555" stroke-width="1.2"/><circle cx="1661" cy="425" r="3" fill="#3f8058"/>
<path d="M1654,450c8,1,12,6,13,13" fill="none" stroke="#555" stroke-width="1.5"/><circle cx="1667" cy="467" r="3.5" fill="#3f8058"/>
<path d="M1653,489c5,0,10,0,11,5c1,4,5,4,5,7" fill="none" stroke="#555"/><circle cx="1658" cy="491" r="2.5" fill="#3f8058"/>
<path d="M1652,538L1671,524M1655,530l4,5M1662,525l4,5" stroke="#b23030"/><circle cx="1661" cy="531" r="2.5" fill="#3f8058"/>
<path d="M1656,626h13v-12" fill="none" stroke="#c9c6c2" stroke-width="1.5"/><circle cx="1656" cy="613" r="2.5" fill="#7db08e" stroke="#3f8058"/>
<path d="M1667,643v14h-14" fill="none" stroke="#444" stroke-dasharray="2 1.5" stroke-width="1.4"/><path d="M1655,649h8M1659,645v8" stroke="#222" stroke-width="1.4"/>
<text x="1651" y="691" font-size="19" font-weight="bold" fill="#111" stroke="#111" stroke-width=".5">A</text><circle cx="1653" cy="690" r="2.5" fill="#7db08e" stroke="#2f6b48"/>
<rect x="1653" y="727" width="12" height="15" fill="url(#page)" stroke="#333" stroke-width="1.2"/>
<path d="M1650,762h18v16h-18zM1650,767h18M1650,773h18M1655,762v16M1660,762v16M1664,762v16" fill="none" stroke="#1c1ca8" stroke-width="1.2"/>
<path d="M1651,796v16M1668,796v16M1656,812L1664,796" stroke="#1c1ca8" stroke-width="1.3" fill="none"/>

<!-- status bar -->
<rect y="905" width="1684" height="38" fill="#f5f4f2"/>
<g font-size="15" fill="#444">
<text x="3" y="921" textLength="22" lengthAdjust="spacingAndGlyphs">Fill:</text><text x="52" y="921" textLength="26" lengthAdjust="spacingAndGlyphs">N/A</text>
<text x="3" y="941" textLength="45" lengthAdjust="spacingAndGlyphs">Stroke:</text><text x="52" y="941" textLength="26" lengthAdjust="spacingAndGlyphs">N/A</text>
<text x="81" y="931" textLength="13" lengthAdjust="spacingAndGlyphs">O:</text>
</g>
<rect x="96.5" y="905.5" width="67" height="40" rx="4" fill="#f5f4f2" stroke="#dedcd9"/><path d="M129,906v37M147,906v37" stroke="#e8e6e3"/>
<text x="100" y="931" font-size="15" fill="#a9a9a9" textLength="23" lengthAdjust="spacingAndGlyphs">100</text><path d="M133,926h10M150,926h10M155,921v10" stroke="#cfcfcf" stroke-width="1.5"/>
<rect x="190" y="905" width="1" height="38" fill="#dedcd9"/>
<ellipse cx="210" cy="926" rx="7" ry="5" fill="#ddd" stroke="#111" stroke-width="1.4"/><circle cx="211" cy="926" r="3" fill="#111"/><path d="M203,921l-1,-3M207,919l-1,-3M211,919v-3M215,919l1,-3" stroke="#111"/>
<rect x="240" y="925" width="11" height="9" fill="#f3dc78" stroke="#111"/><path d="M243,925v-3a3.5,3.5,0,0,1,7,-1" fill="none" stroke="#111" stroke-width="1.3"/><rect x="245" y="928" width="2" height="3" fill="#111"/>
<rect x="265.5" y="905.5" width="111" height="40" rx="5" fill="url(#btn)" stroke="#dedcd9"/>
<text x="294" y="931" font-size="14" font-weight="bold" font-style="italic" fill="#333" textLength="55" lengthAdjust="spacingAndGlyphs">•#g15605</text><use href="#dn" x="360" y="925"/>
<rect x="1320" y="905" width="1" height="38" fill="#dedcd9"/>
<g font-size="15" fill="#444">
<text x="1331" y="920" textLength="11" lengthAdjust="spacingAndGlyphs">X:</text><text x="1363" y="920" textLength="37" lengthAdjust="spacingAndGlyphs">75,90</text>
<text x="1331" y="941" textLength="11" lengthAdjust="spacingAndGlyphs">Y:</text><text x="1363" y="941" textLength="37" lengthAdjust="spacingAndGlyphs">87,13</text>
<text x="1411" y="931" textLength="12" lengthAdjust="spacingAndGlyphs">Z:</text><text x="1544" y="931" textLength="12" lengthAdjust="spacingAndGlyphs">R:</text>
</g>
<rect x="1433.5" y="905.5" width="98" height="40" rx="5" fill="#fff" stroke="#dedcd9"/><rect x="1566.5" y="905.5" width="106" height="40" rx="5" fill="#fff" stroke="#dedcd9"/>
<path d="M1488,906v37M1509,906v37M1629,906v37M1650,906v37" stroke="#eeeded"/>
<text x="1448" y="931" font-size="15" fill="#333" textLength="30" lengthAdjust="spacingAndGlyphs">50%</text><text x="1585" y="931" font-size="15" fill="#333" textLength="40" lengthAdjust="spacingAndGlyphs">0,00°</text>
<path d="M1494,926h10M1515,926h10M1520,921v10M1635,926h10M1656,926h10M1661,921v10" stroke="#3f3f3f" stroke-width="2"/>
<rect y="943" width="1684" height="1.5" fill="#555"/>
<rect y="944.5" width="1684" height="2" fill="#fff"/>
</svg>
<div id="pal"><i style="background:#000"></i><i style="background:#1a1a1a"></i><i style="background:#333"></i><i style="background:#4d4d4d"></i><i style="background:#666"></i><i style="background:#808080"></i><i style="background:#999"></i><i style="background:#b3b3b3"></i><i style="background:#ccc"></i><i style="background:#e6e6e6"></i><i style="background:#ececec"></i><i style="background:#f2f2f2"></i><i style="background:#f9f9f9"></i><i style="background:#fff"></i><i style="background:#800000"></i><i style="background:#f00"></i><i style="background:#808000"></i><i style="background:#ff0"></i><i style="background:#008000"></i><i style="background:#0f0"></i><i style="background:#008080"></i><i style="background:#0ff"></i><i style="background:#000080"></i><i style="background:#00f"></i><i style="background:#800080"></i><i style="background:#f0f"></i><i style="background:#2b0000"></i><i style="background:#500"></i><i style="background:#800000"></i><i style="background:#a00"></i><i style="background:#d40000"></i><i style="background:#f00"></i><i style="background:#ff2a2a"></i><i style="background:#f55"></i><i style="background:#ff8080"></i><i style="background:#faa"></i><i style="background:#ffd5d5"></i><i style="background:#280b0b"></i><i style="background:#501616"></i><i style="background:#782121"></i><i style="background:#a02c2c"></i><i style="background:#c83737"></i><i style="background:#d35f5f"></i><i style="background:#de8787"></i><i style="background:#e9afaf"></i><i style="background:#f4d7d7"></i><i style="background:#241c1c"></i><i style="background:#483737"></i><i style="background:#6c5353"></i><i style="background:#916f6f"></i><i style="background:#ac9393"></i><i style="background:#c8b7b7"></i><i style="background:#e3dbdb"></i><i style="background:#2b1100"></i><i style="background:#520"></i><i style="background:#803300"></i><i style="background:#a40"></i><i style="background:#d45500"></i><i style="background:#f60"></i><i style="background:#ff7f2a"></i><i style="background:#f95"></i><i style="background:#ffb380"></i><i style="background:#fca"></i><i style="background:#ffe6d5"></i><i style="background:#28170b"></i><i style="background:#502d16"></i><i style="background:#784421"></i><i style="background:#a05a2c"></i><i style="background:#c87137"></i><i style="background:#d38d5f"></i><i style="background:#deaa87"></i><i style="background:#e9c6af"></i><i style="background:#f4e3d7"></i><i style="background:#241f1c"></i><i style="background:#483e37"></i><i style="background:#6c5d53"></i><i style="background:#917c6f"></i><i style="background:#ac9d93"></i><i style="background:#c8beb7"></i><i style="background:#e3dedb"></i><i style="background:#2b2200"></i><i style="background:#540"></i><i style="background:#806600"></i><i style="background:#a80"></i><i style="background:#d4aa00"></i><i style="background:#fc0"></i></div>
</body></html>
